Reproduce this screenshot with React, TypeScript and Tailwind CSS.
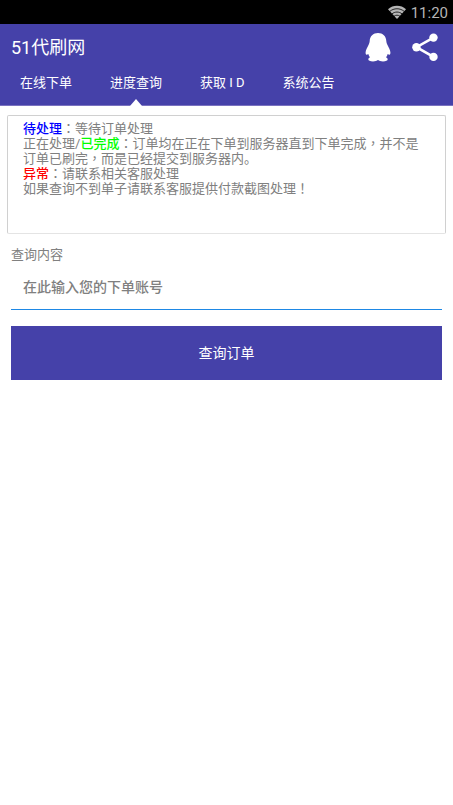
import { useState } from "react";

const TABS = ["在线下单", "进度查询", "获取 I D", "系统公告"];

// full-width punctuation centred in its cell
function P({ children }: { children: string }) {
  return (
    <span className="font-[Roboto,'Noto_Sans_CJK_TC',sans-serif]" lang="zh-Hant">
      {children}
    </span>
  );
}

function StatusBar() {
  return (
    <div className="flex h-6 items-center justify-end gap-1 bg-black pr-[5px] text-[#b5b5b5]">
      <svg viewBox="0 0 20 16" className="h-4 w-5" fill="none" stroke="currentColor">
        <path d="M1 5.200L10 15l9-9.800C14 .6 6 .6 1 5.200z" fill="currentColor" stroke="none" />
        <path d="M2.500 7.600c4.400-3.800 10.600-3.800 15 0M4.800 10c3.100-2.600 7.300-2.600 10.400 0M7 12.300c1.800-1.500 4.200-1.500 6 0" stroke="#000" strokeWidth="0.8" />
      </svg>
      <span className="pt-px text-[15px] leading-6">11:20</span>
    </div>
  );
}

function PenguinIcon() {
  return (
    <svg viewBox="0 0 26 30" className="h-[30px] w-[26px]" fill="currentColor">
      <path d="M13 1C8.200 1 4.900 4.200 4.700 9c-.1 1.600-.5 2.600-1.200 4C2.200 15.600.8 17.800.6 20.300c-.1 1.500.3 2.400.9 2.400.6 0 1.200-.4 1.800-.8.400 1.400 1 2.600 1.700 3.400-1.100.5-1.700 1.200-1.700 2 0 1.500 1.800 2.100 4.700 2.100 2.200 0 4-.5 5-1.400 1 .9 2.800 1.400 5 1.400 2.900 0 4.700-.6 4.700-2.100 0-.8-.6-1.500-1.700-2 .7-.8 1.300-2 1.700-3.400.6.4 1.200.8 1.800.8.600 0 1-.9.900-2.400-.2-2.500-1.600-4.700-2.900-7.300-.7-1.400-1.100-2.400-1.200-4C21.100 4.200 17.800 1 13 1z" />
    </svg>
  );
}

function ShareIcon() {
  return (
    <svg viewBox="0 0 26 29" className="h-[29px] w-[26px]" fill="currentColor">
      <path d="M21.500 4.600L4.500 14.200l17 9.700" fill="none" stroke="currentColor" strokeWidth="2.600" />
      <circle cx="21.500" cy="4.600" r="4.200" />
      <circle cx="4.400" cy="14.200" r="4.200" />
      <circle cx="21.500" cy="23.900" r="4.200" />
    </svg>
  );
}

export default function App() {
  const [active, setActive] = useState(1);
  const [account, setAccount] = useState("");

  return (
    <div
      lang="zh-Hans"
      className="min-h-screen bg-white font-[Roboto,'Noto_Sans_CJK_SC',sans-serif] text-[13px] text-[#808080]"
    >
      <StatusBar />

      <header className="border-b border-[#7a72c0] bg-[#4541a9] text-white">
        <div className="flex h-[46px] items-center justify-between pr-[15px] pl-[11px]">
          <h1 className="pt-0.5 text-lg leading-6">51代刷网</h1>
          <div className="flex items-center gap-[21px]">
            <button type="button" aria-label="QQ">
              <PenguinIcon />
            </button>
            <button type="button" aria-label="分享">
              <ShareIcon />
            </button>
          </div>
        </div>
        <nav className="flex h-[35px] pl-px">
          {TABS.map((tab, i) => (
            <button
              key={tab}
              type="button"
              onClick={() => setActive(i)}
              className="flex flex-col items-center justify-between px-[19px] pt-[3px] leading-5 whitespace-nowrap"
            >
              {tab}
              {i === active && (
                <svg viewBox="0 0 12 7" className="-mb-px h-[7px] w-3" fill="#fff">
                  <path d="M6 0l6 7H0z" />
                </svg>
              )}
            </button>
          ))}
        </nav>
      </header>

      <main className="pt-[9px]">
        <section className="mx-[7px] h-[119px] rounded-xs border border-[#d0d0d0] border-b-[#e4e4e4] px-[15px] pt-[5px] leading-[15px]">
          <p>
            <b className="font-medium text-[#0000ff]">待处理</b>
            <P>：</P>等待订单处理
          </p>
          <p>
            正在处理/<b className="font-medium text-[#00ff00]">已完成</b>
            <P>：</P>订单均在正在下单到服务器直到下单完成<P>，</P>并不是订单已刷完<P>，</P>
            而是已经提交到服务器内。
          </p>
          <p>
            <b className="font-medium text-[#ff0000]">异常</b>
            <P>：</P>请联系相关客服处理
          </p>
          <p>
            如果查询不到单子请联系客服提供付款截图处理<P>！</P>
          </p>
        </section>

        <form className="px-[11px] pt-[11px]" onSubmit={(e) => e.preventDefault()}>
          <label htmlFor="account" className="block leading-5">
            查询内容
          </label>
          <input
            id="account"
            value={account}
            onChange={(e) => setAccount(e.target.value)}
            placeholder="在此输入您的下单账号"
            className="block h-[45px] w-full border-b border-[#1e88e5] px-3 text-sm font-medium outline-none placeholder:text-[#808080]"
          />
          <button
            type="submit"
            className="mt-4 block h-[54px] w-full bg-[#4541a9] text-sm text-white"
          >
            查询订单
          </button>
        </form>
      </main>
    </div>
  );
}
